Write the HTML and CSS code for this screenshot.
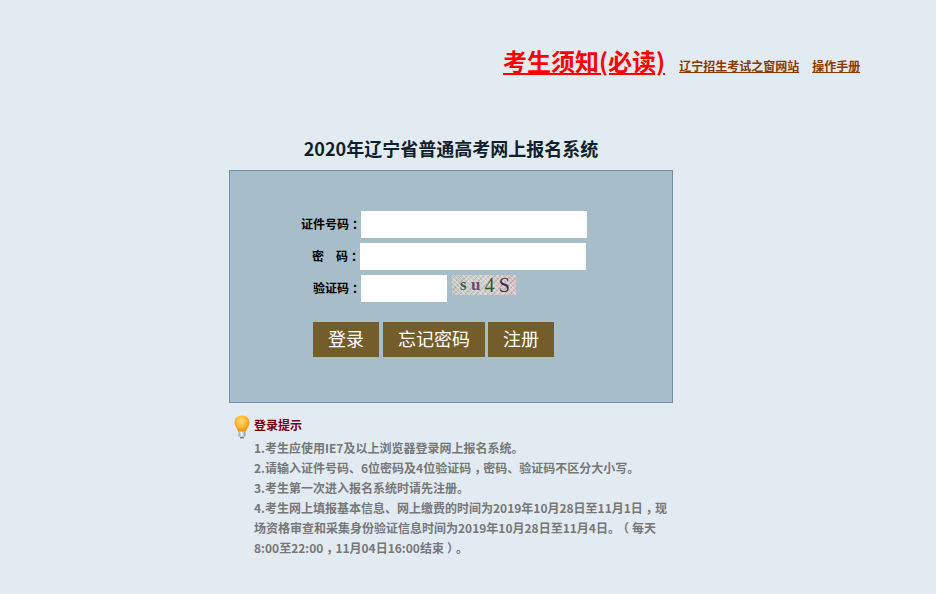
FILE: index.html
```html
<!DOCTYPE html>
<html lang="zh-CN">
<head>
    <meta charset="UTF-8">
    <meta name="viewport" content="width=device-width, initial-scale=1.0">
    <title>2020年辽宁省普通高考网上报名系统</title>
    <link rel="stylesheet" href="styles.css">
</head>
<body>
    <div class="top-links">
        <a class="notice" href="#">考生须知(必读)</a>
        <a class="small-link" href="#">辽宁招生考试之窗网站</a>
        <a class="small-link" href="#">操作手册</a>
    </div>
    <div class="container">
        <h1>2020年辽宁省普通高考网上报名系统</h1>
        <form class="login-box">
            <div class="row">
                <label>证件号码<span class="punct">：</span></label>
                <input type="text" class="long">
            </div>
            <div class="row row-password">
                <label>密　码<span class="punct">：</span></label>
                <input type="password" class="long">
            </div>
            <div class="row">
                <label>验证码<span class="punct">：</span></label>
                <input type="text" class="short">
                <div class="captcha">
                    <span class="c1">s</span><span class="c2">u</span><span class="c3">4</span><span class="c4">S</span>
                </div>
            </div>
            <div class="buttons">
                <button type="button" class="btn-login">登录</button>
                <button type="button" class="btn-forget">忘记密码</button>
                <button type="button" class="btn-register">注册</button>
            </div>
        </form>
        <div class="tips">
            <svg class="bulb" width="18" height="24" viewBox="0 0 18 24">
                <defs>
                    <radialGradient id="glow" cx="0.45" cy="0.35" r="0.65">
                        <stop offset="0" stop-color="#ffe27a"/>
                        <stop offset="0.55" stop-color="#fdb62c"/>
                        <stop offset="1" stop-color="#f08a10"/>
                    </radialGradient>
                    <linearGradient id="base" x1="0" x2="1" y1="0" y2="0">
                        <stop offset="0" stop-color="#8f9a9c"/>
                        <stop offset="0.45" stop-color="#f2f4f4"/>
                        <stop offset="1" stop-color="#8a9496"/>
                    </linearGradient>
                </defs>
                <path d="M9 0.5C4.4 0.5 1.5 3.6 1.5 7.4c0 3.6 3 5.6 3.7 9.4h7.6c.7-3.8 3.7-5.8 3.7-9.4C16.500 3.600 13.600 0.500 9 0.500z" fill="url(#glow)"/>
                <rect x="5.500" y="16.800" width="7" height="5" rx="1" fill="url(#base)"/>
                <rect x="7" y="21.800" width="4" height="1.700" rx="0.800" fill="#6f7a7c"/>
            </svg>
            <h2>登录提示</h2>
            <p>1.考生应使用IE7及以上浏览器登录网上报名系统。</p>
            <p>2.请输入证件号码、6位密码及4位验证码<span class="punct">，</span>密码、验证码不区分大小写。</p>
            <p>3.考生第一次进入报名系统时请先注册。</p>
            <p>4.考生网上填报基本信息、网上缴费的时间为2019年10月28日至11月1日<span class="punct">，</span>现场资格审查和采集身份验证信息时间为2019年10月28日至11月4日。<span class="punct">（</span>每天8:00至22:00<span class="punct">，</span>11月04日16:00结束<span class="punct">）</span>。</p>
        </div>
    </div>
</body>
</html>
```

FILE: styles.css
```css
body {
    margin: 0;
    background-color: #e2ebf2;
    font-family: "Noto Sans CJK SC", "Liberation Sans", sans-serif;
    font-size: 12px;
    color: #000;
    overflow: hidden;
}
.punct {
    display: inline-block;
    width: 1em;
    text-align: center;
    font-feature-settings: "halt";
}
.top-links {
    display: flex;
    align-items: baseline;
    height: 48px;
    padding: 43px 0 0 503px;
}
.notice {
    font-size: 24px;
    font-weight: bold;
    line-height: 36px;
    color: #ff0000;
    margin-right: 14px;
}
.small-link {
    font-size: 12px;
    font-weight: bold;
    color: #8a3a00;
    margin-right: 13px;
}
.container {
    width: 444px;
    margin-left: 229px;
}
h1 {
    box-sizing: border-box;
    display: flex;
    align-items: flex-end;
    justify-content: center;
    height: 79px;
    margin: 0;
    padding-bottom: 2px;
    font-size: 18px;
    line-height: 40px;
    color: #0f1f2b;
}
.login-box {
    box-sizing: border-box;
    height: 233px;
    background-color: #a7bdca;
    border: 1px solid #6f8fa3;
    padding: 40px 0 0 0;
}
.row {
    display: flex;
    align-items: center;
    height: 27px;
    margin-bottom: 5px;
}
.row label {
    width: 131px;
    padding-bottom: 3px;
    text-align: right;
    font-size: 12px;
    font-weight: bold;
    white-space: nowrap;
}
.row-password label {
    width: 130px;
}
.row input {
    box-sizing: border-box;
    height: 27px;
    border: none;
    padding: 0 4px;
    background: #fff;
}
.long {
    width: 226px;
}
.short {
    width: 86px;
}
.captcha {
    align-self: flex-start;
    display: flex;
    justify-content: space-between;
    align-items: center;
    width: 64px;
    height: 20px;
    margin-left: 5px;
    padding: 0 6px 0 8px;
    box-sizing: border-box;
    background:
        repeating-linear-gradient(45deg, rgba(255, 255, 255, 0.3) 0 1px, transparent 1px 3px),
        repeating-linear-gradient(-45deg, rgba(110, 150, 125, 0.35) 0 1px, transparent 1px 4px),
        linear-gradient(90deg, #c4c4c0, #d4cfcc 50%, #dcbcc4);
    font-family: "Liberation Serif", serif;
    font-size: 20px;
    line-height: 20px;
}
.c1 { color: #3d5a4a; font-weight: bold; font-size: 17px; }
.c2 { color: #6a4a72; font-weight: bold; font-size: 17px; }
.c3 { color: #2f5a3c; }
.c4 { color: #3f2c44; }
.buttons {
    display: flex;
    margin: 20px 0 0 83px;
}
.buttons button {
    height: 35px;
    border: none;
    padding: 0 0 3px;
    background-color: #735d2b;
    color: #fff;
    font-family: "Noto Sans CJK SC", sans-serif;
    font-size: 18px;
}
.btn-login {
    width: 66px;
    margin-right: 4px;
}
.btn-forget {
    width: 102px;
    margin-right: 3px;
}
.btn-register {
    width: 66px;
}
.tips {
    position: relative;
    padding: 12px 0 0 25px;
    width: 418px;
    font-weight: bold;
    color: #777;
    line-height: 20px;
}
.bulb {
    position: absolute;
    left: 4px;
    top: 12px;
}
.tips h2 {
    margin: 0 0 3px;
    font-size: 12px;
    line-height: 20px;
    color: #7a0010;
}
.tips p {
    margin: 0;
}
```
